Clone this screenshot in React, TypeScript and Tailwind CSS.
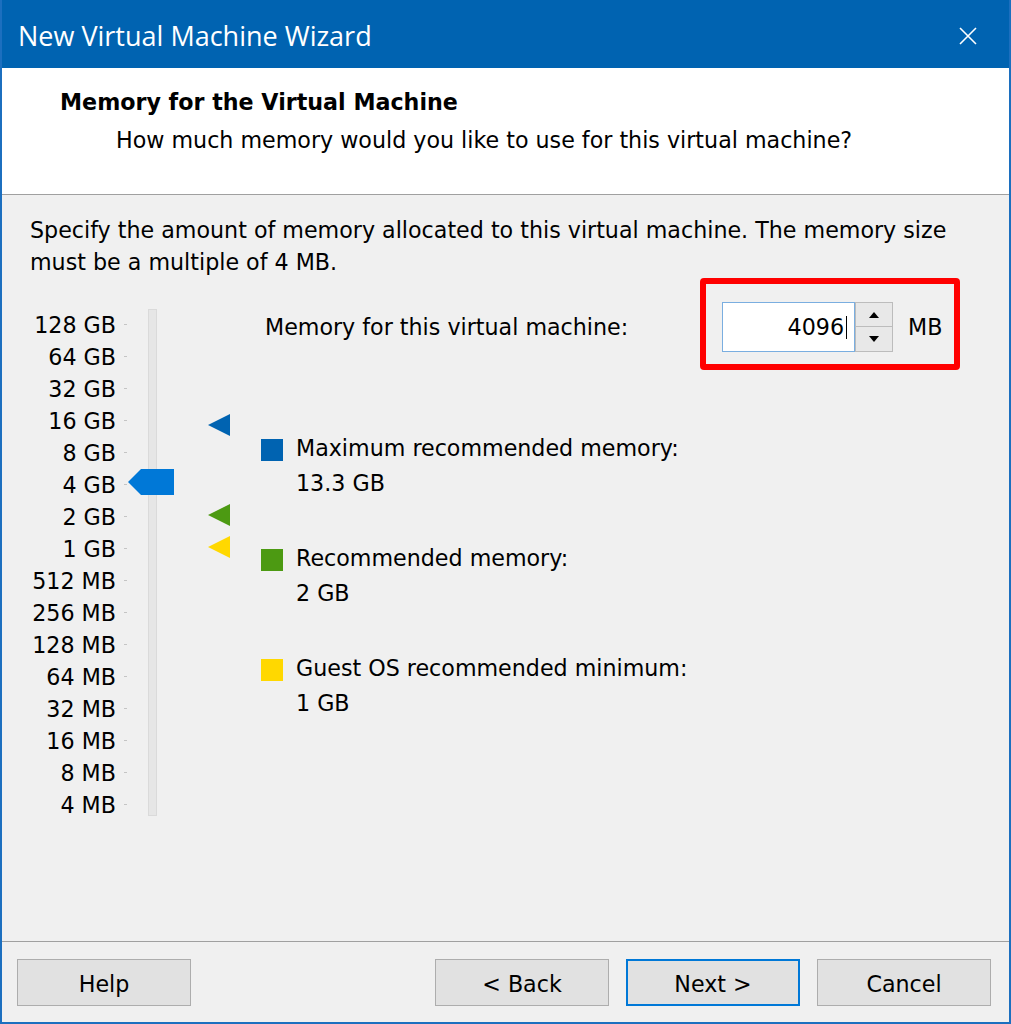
import React from "react";

const scale = [
  "128 GB", "64 GB", "32 GB", "16 GB", "8 GB", "4 GB", "2 GB", "1 GB",
  "512 MB", "256 MB", "128 MB", "64 MB", "32 MB", "16 MB", "8 MB", "4 MB",
];

function Arrow({ up }: { up: boolean }) {
  return (
    <svg width="10" height="6" viewBox="0 0 10 6">
      {up ? <polygon points="0,6 5,0 10,6" fill="#000" /> : <polygon points="0,0 10,0 5,6" fill="#000" />}
    </svg>
  );
}

function Slider() {
  return (
    <div className="w-[235px] shrink-0 pt-[30px]">
      <div className="relative">
        {scale.map((s) => (
          <div key={s} className="flex h-[32px] items-center">
            <span className="w-[86px] whitespace-nowrap pt-[2px] text-right">{s}</span>
            <span className="ml-[8px] h-[1px] w-[3px] bg-[#c4c4c4]" />
          </div>
        ))}
        {/* track */}
        <div className="absolute left-[118px] top-[1px] h-[507px] w-[9px] border border-[#dadada] bg-[#e6e6e6]" />
        {/* thumb */}
        <svg className="absolute left-[98px] top-[161px]" width="46" height="26" viewBox="0 0 46 26">
          <polygon points="0,13 13,0 46,0 46,26 13,26" fill="#0078d7" />
        </svg>
        {/* recommendation markers */}
        <svg className="absolute left-[178px] top-[106px]" width="22" height="22" viewBox="0 0 22 22">
          <polygon points="0,11 22,0 22,22" fill="#0063b1" />
        </svg>
        <svg className="absolute left-[178px] top-[196px]" width="22" height="22" viewBox="0 0 22 22">
          <polygon points="0,11 22,0 22,22" fill="#4c9a12" />
        </svg>
        <svg className="absolute left-[178px] top-[228px]" width="22" height="22" viewBox="0 0 22 22">
          <polygon points="0,11 22,0 22,22" fill="#ffd800" />
        </svg>
      </div>
    </div>
  );
}

function Button({ label, primary }: { label: string; primary?: boolean }) {
  return (
    <div
      className={
        primary
          ? "flex h-[47px] w-[174px] items-center justify-center border-2 border-[#0078d7] bg-[#e1e1e1] pt-[2px]"
          : "flex h-[47px] w-[174px] items-center justify-center border border-[#adadad] bg-[#e1e1e1] pt-[2px]"
      }
    >
      {label}
    </div>
  );
}

export default function App() {
  return (
    <div className="flex h-[1024px] w-[1011px] flex-col overflow-hidden border-x-2 border-b-2 border-[#1c6fbf] bg-[#f0f0f0] font-['DejaVu_Sans','Noto_Sans',sans-serif] text-[22.2px] leading-[32px] text-black">
      {/* title bar */}
      <div className="flex h-[68px] shrink-0 items-center justify-between bg-[#0063b1] pl-[16px] pr-[32px] pt-[4px] text-white">
        <span className="font-['Open_Sans','Noto_Sans',sans-serif] text-[27px]">New Virtual Machine Wizard</span>
        <svg width="18" height="18" viewBox="0 0 18 18">
          <path d="M1 1 L17 17 M17 1 L1 17" stroke="#fff" strokeWidth="1.6" />
        </svg>
      </div>

      {/* page header */}
      <div className="h-[127px] shrink-0 border-b border-[#a0a0a0] bg-white pl-[58px] pt-[18px]">
        <div className="font-bold">Memory for the Virtual Machine</div>
        <div className="ml-[56px] mt-[6px]">How much memory would you like to use for this virtual machine?</div>
      </div>

      {/* page body */}
      <div className="flex-1 pl-[28px] pt-[19px]">
        <p className="whitespace-nowrap">
          Specify the amount of memory allocated to this virtual machine. The memory size
          <br />
          must be a multiple of 4 MB.
        </p>
        <div className="flex">
          <Slider />
          <div className="flex flex-col">
            <div className="flex items-center">
              <span className="w-[435px] pt-[5px]">Memory for this virtual machine:</span>
              <div className="flex h-[92px] w-[260px] items-start rounded-[4px] border-[6px] border-[#ff0000] pl-[16px] pt-[18px]">
                <div className="flex h-[50px] w-[133px] items-center justify-end border border-[#7aaee0] bg-white pr-[7px]">
                  <span>4096</span>
                  <span className="ml-[2px] h-[23px] w-[1px] bg-black" />
                </div>
                <div className="flex h-[50px] w-[38px] flex-col">
                  <div className="flex h-[25px] items-center justify-center border border-[#bcbcbc] bg-[#e8e8e8]">
                    <Arrow up />
                  </div>
                  <div className="-mt-[1px] flex h-[26px] items-center justify-center border border-[#bcbcbc] bg-[#e8e8e8]">
                    <Arrow up={false} />
                  </div>
                </div>
                <span className="ml-[15px] self-center -mt-[12px]">MB</span>
              </div>
            </div>

            <div className="-ml-[4px] mt-[60px] flex flex-col gap-[39px] leading-[35px]">
              <div className="flex">
                <div className="mt-[9px] h-[22px] w-[22px] bg-[#0063b1]" />
                <div className="ml-[13px] pt-[1px]">
                  Maximum recommended memory:
                  <br />
                  13.3 GB
                </div>
              </div>
              <div className="flex">
                <div className="mt-[9px] h-[22px] w-[22px] bg-[#4c9a12]" />
                <div className="ml-[13px] pt-[1px]">
                  Recommended memory:
                  <br />
                  2 GB
                </div>
              </div>
              <div className="flex">
                <div className="mt-[9px] h-[22px] w-[22px] bg-[#ffd800]" />
                <div className="ml-[13px] pt-[1px]">
                  Guest OS recommended minimum:
                  <br />
                  1 GB
                </div>
              </div>
            </div>
          </div>
        </div>
      </div>

      {/* wizard buttons */}
      <div className="flex h-[81px] shrink-0 items-start border-t border-[#a0a0a0] pl-[15px] pr-[18px] pt-[17px]">
        <Button label="Help" />
        <div className="flex-1" />
        <div className="flex gap-[17px]">
          <Button label="< Back" />
          <Button label="Next >" primary />
          <Button label="Cancel" />
        </div>
      </div>
    </div>
  );
}
